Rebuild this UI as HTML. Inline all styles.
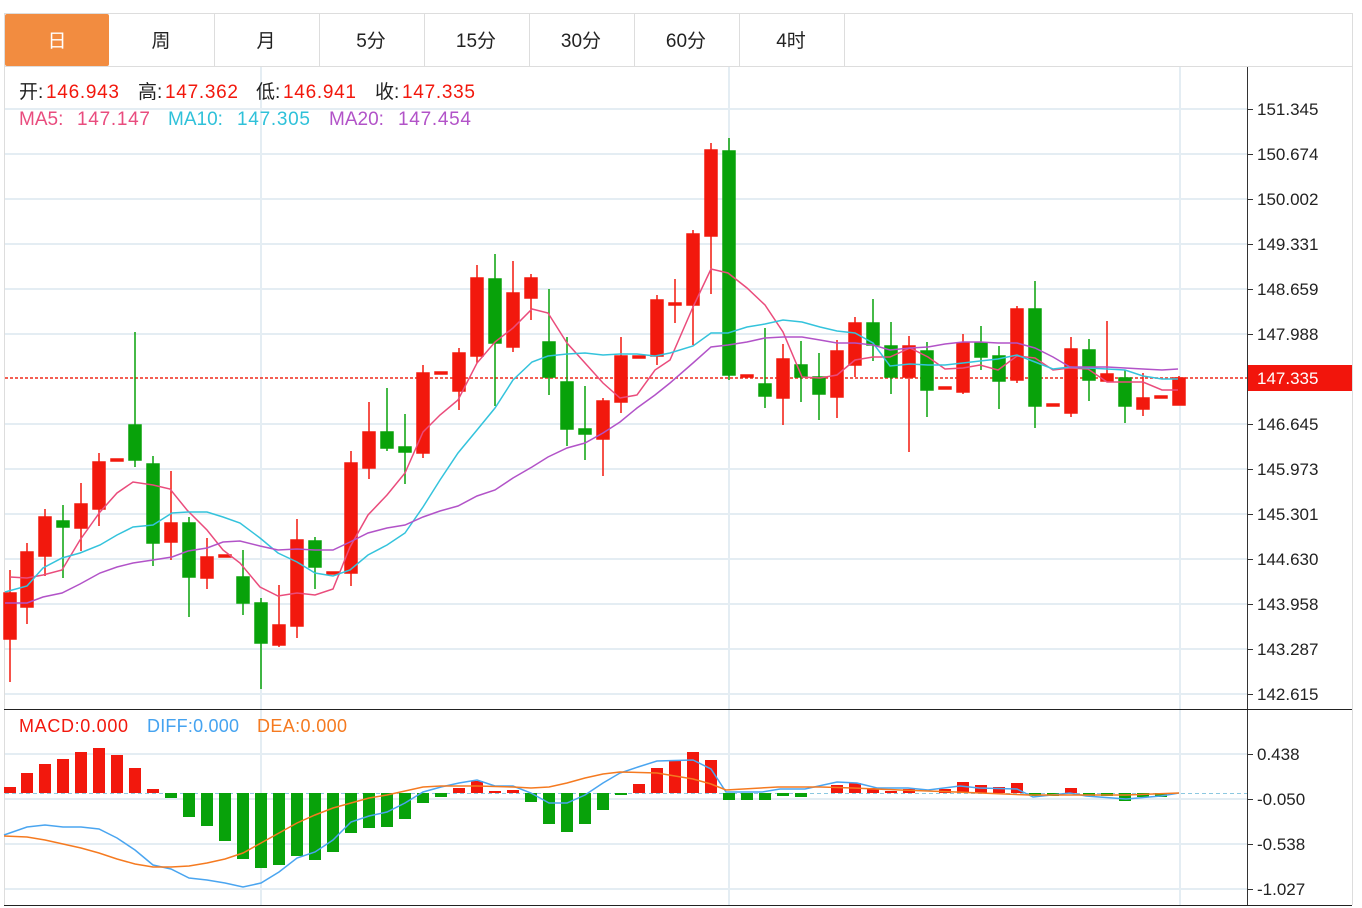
<!DOCTYPE html>
<html><head><meta charset="utf-8"><style>
body{margin:0;background:#fff;width:1362px;height:908px;overflow:hidden;font-family:"Liberation Sans","Noto Sans CJK SC",sans-serif}
</style></head><body>
<svg width="1362" height="908" xmlns="http://www.w3.org/2000/svg" style="position:absolute;left:0;top:0;font-family:'Liberation Sans','Noto Sans CJK SC',sans-serif">
<rect x="4.5" y="13.5" width="1348" height="53" fill="#fff" stroke="#ddd"/>
<rect x="5" y="14" width="104" height="52" rx="2" fill="#f28c40"/>
<g stroke="#ddd"><line x1="214.5" y1="13" x2="214.5" y2="66"/><line x1="319.5" y1="13" x2="319.5" y2="66"/><line x1="424.5" y1="13" x2="424.5" y2="66"/><line x1="529.5" y1="13" x2="529.5" y2="66"/><line x1="634.5" y1="13" x2="634.5" y2="66"/><line x1="739.5" y1="13" x2="739.5" y2="66"/><line x1="844.5" y1="13" x2="844.5" y2="66"/></g>
<g font-size="19" text-anchor="middle" fill="#222"><text x="57" y="47" fill="#fff">日</text><text x="161" y="47">周</text><text x="266" y="47">月</text><text x="371" y="47">5分</text><text x="476" y="47">15分</text><text x="581" y="47">30分</text><text x="686" y="47">60分</text><text x="791" y="47">4时</text></g>
<line x1="4.5" y1="66" x2="4.5" y2="905" stroke="#ddd"/>
<line x1="1352.5" y1="66" x2="1352.5" y2="905" stroke="#ddd"/>
<g stroke="#e4edf3" stroke-width="2">
<line x1="5" y1="109" x2="1247" y2="109"/><line x1="5" y1="154" x2="1247" y2="154"/><line x1="5" y1="199" x2="1247" y2="199"/><line x1="5" y1="244" x2="1247" y2="244"/><line x1="5" y1="289" x2="1247" y2="289"/><line x1="5" y1="334" x2="1247" y2="334"/><line x1="5" y1="424" x2="1247" y2="424"/><line x1="5" y1="469" x2="1247" y2="469"/><line x1="5" y1="514" x2="1247" y2="514"/><line x1="5" y1="559" x2="1247" y2="559"/><line x1="5" y1="604" x2="1247" y2="604"/><line x1="5" y1="649" x2="1247" y2="649"/><line x1="5" y1="694" x2="1247" y2="694"/>
<line x1="5" y1="754" x2="1247" y2="754"/><line x1="5" y1="799" x2="1247" y2="799"/><line x1="5" y1="844" x2="1247" y2="844"/><line x1="5" y1="889" x2="1247" y2="889"/>
<line x1="261" y1="67" x2="261" y2="905"/><line x1="729" y1="67" x2="729" y2="905"/><line x1="1180" y1="67" x2="1180" y2="905"/>
</g>
<line x1="1247.5" y1="67" x2="1247.5" y2="905" stroke="#333"/>
<line x1="4" y1="709.5" x2="1352" y2="709.5" stroke="#222"/>
<line x1="4" y1="905.5" x2="1352" y2="905.5" stroke="#222"/>
<g stroke="#333"><line x1="1247" y1="109.5" x2="1253" y2="109.5"/><line x1="1247" y1="154.5" x2="1253" y2="154.5"/><line x1="1247" y1="199.5" x2="1253" y2="199.5"/><line x1="1247" y1="244.5" x2="1253" y2="244.5"/><line x1="1247" y1="289.5" x2="1253" y2="289.5"/><line x1="1247" y1="334.5" x2="1253" y2="334.5"/><line x1="1247" y1="424.5" x2="1253" y2="424.5"/><line x1="1247" y1="469.5" x2="1253" y2="469.5"/><line x1="1247" y1="514.5" x2="1253" y2="514.5"/><line x1="1247" y1="559.5" x2="1253" y2="559.5"/><line x1="1247" y1="604.5" x2="1253" y2="604.5"/><line x1="1247" y1="649.5" x2="1253" y2="649.5"/><line x1="1247" y1="694.5" x2="1253" y2="694.5"/><line x1="1247" y1="754.5" x2="1253" y2="754.5"/><line x1="1247" y1="799.5" x2="1253" y2="799.5"/><line x1="1247" y1="844.5" x2="1253" y2="844.5"/><line x1="1247" y1="889.5" x2="1253" y2="889.5"/></g>
<g font-size="17" fill="#222"><text x="1257" y="115">151.345</text><text x="1257" y="160">150.674</text><text x="1257" y="205">150.002</text><text x="1257" y="250">149.331</text><text x="1257" y="295">148.659</text><text x="1257" y="340">147.988</text><text x="1257" y="430">146.645</text><text x="1257" y="475">145.973</text><text x="1257" y="520">145.301</text><text x="1257" y="565">144.630</text><text x="1257" y="610">143.958</text><text x="1257" y="655">143.287</text><text x="1257" y="700">142.615</text>
<text x="1257" y="760">0.438</text><text x="1257" y="805">-0.050</text><text x="1257" y="850">-0.538</text><text x="1257" y="895">-1.027</text></g>
<line x1="5" y1="378" x2="1247" y2="378" stroke="#f02a1a" stroke-dasharray="3,2" stroke-width="1.5"/>
<rect x="1248" y="365" width="104" height="26" fill="#f2150c"/>
<text x="1257" y="384" font-size="17" fill="#fff">147.335</text>
<g stroke-width="1.5">
<g stroke="#f2180d" fill="#f2180d">
<line x1="10" y1="570" x2="10" y2="682"/><rect x="4" y="593" width="12" height="46"/>
<line x1="27" y1="543" x2="27" y2="624"/><rect x="21" y="552" width="12" height="55"/>
<line x1="45" y1="509" x2="45" y2="576"/><rect x="39" y="517" width="12" height="39"/>
<line x1="81" y1="483" x2="81" y2="551"/><rect x="75" y="504" width="12" height="24"/>
<line x1="99" y1="453" x2="99" y2="526"/><rect x="93" y="462" width="12" height="47"/>
<rect x="111" y="459" width="12" height="2"/>
<line x1="171" y1="471" x2="171" y2="560"/><rect x="165" y="523" width="12" height="19"/>
<line x1="207" y1="538" x2="207" y2="589"/><rect x="201" y="557" width="12" height="21"/>
<rect x="219" y="555" width="12" height="2"/>
<line x1="279" y1="585" x2="279" y2="647"/><rect x="273" y="625" width="12" height="20"/>
<line x1="297" y1="519" x2="297" y2="638"/><rect x="291" y="540" width="12" height="86"/>
<rect x="327" y="572" width="12" height="2"/>
<line x1="351" y1="451" x2="351" y2="586"/><rect x="345" y="463" width="12" height="110"/>
<line x1="369" y1="402" x2="369" y2="479"/><rect x="363" y="432" width="12" height="36"/>
<line x1="423" y1="365" x2="423" y2="458"/><rect x="417" y="373" width="12" height="80"/>
<rect x="435" y="372" width="12" height="2"/>
<line x1="459" y1="348" x2="459" y2="410"/><rect x="453" y="353" width="12" height="38"/>
<line x1="477" y1="265" x2="477" y2="363"/><rect x="471" y="278" width="12" height="78"/>
<line x1="513" y1="261" x2="513" y2="352"/><rect x="507" y="293" width="12" height="54"/>
<line x1="531" y1="274" x2="531" y2="320"/><rect x="525" y="278" width="12" height="20"/>
<line x1="603" y1="398" x2="603" y2="476"/><rect x="597" y="401" width="12" height="38"/>
<line x1="621" y1="337" x2="621" y2="413"/><rect x="615" y="356" width="12" height="46"/>
<rect x="633" y="356" width="12" height="2"/>
<line x1="657" y1="295" x2="657" y2="365"/><rect x="651" y="300" width="12" height="56"/>
<line x1="675" y1="279" x2="675" y2="323"/><rect x="669" y="303" width="12" height="2"/>
<line x1="693" y1="230" x2="693" y2="345"/><rect x="687" y="234" width="12" height="71"/>
<line x1="711" y1="143" x2="711" y2="294"/><rect x="705" y="150" width="12" height="86"/>
<rect x="741" y="375" width="12" height="2"/>
<line x1="783" y1="344" x2="783" y2="425"/><rect x="777" y="359" width="12" height="39"/>
<line x1="837" y1="340" x2="837" y2="418"/><rect x="831" y="351" width="12" height="46"/>
<line x1="855" y1="317" x2="855" y2="377"/><rect x="849" y="323" width="12" height="42"/>
<line x1="909" y1="336" x2="909" y2="452"/><rect x="903" y="346" width="12" height="31"/>
<rect x="939" y="387" width="12" height="2"/>
<line x1="963" y1="334" x2="963" y2="394"/><rect x="957" y="343" width="12" height="49"/>
<line x1="1017" y1="306" x2="1017" y2="383"/><rect x="1011" y="309" width="12" height="71"/>
<rect x="1047" y="404" width="12" height="2"/>
<line x1="1071" y1="337" x2="1071" y2="417"/><rect x="1065" y="349" width="12" height="64"/>
<line x1="1107" y1="321" x2="1107" y2="381"/><rect x="1101" y="374" width="12" height="7"/>
<line x1="1143" y1="373" x2="1143" y2="416"/><rect x="1137" y="398" width="12" height="11"/>
<rect x="1155" y="396" width="12" height="2"/>
<line x1="1179" y1="376" x2="1179" y2="405"/><rect x="1173" y="378" width="12" height="27"/>
</g>
<g stroke="#08a20a" fill="#08a20a">
<line x1="63" y1="505" x2="63" y2="578"/><rect x="57" y="521" width="12" height="6"/>
<line x1="135" y1="332" x2="135" y2="467"/><rect x="129" y="425" width="12" height="35"/>
<line x1="153" y1="456" x2="153" y2="566"/><rect x="147" y="464" width="12" height="79"/>
<line x1="189" y1="517" x2="189" y2="617"/><rect x="183" y="523" width="12" height="54"/>
<line x1="243" y1="550" x2="243" y2="615"/><rect x="237" y="577" width="12" height="26"/>
<line x1="261" y1="598" x2="261" y2="689"/><rect x="255" y="603" width="12" height="40"/>
<line x1="315" y1="537" x2="315" y2="589"/><rect x="309" y="541" width="12" height="26"/>
<line x1="387" y1="388" x2="387" y2="451"/><rect x="381" y="432" width="12" height="16"/>
<line x1="405" y1="414" x2="405" y2="484"/><rect x="399" y="447" width="12" height="5"/>
<line x1="495" y1="254" x2="495" y2="406"/><rect x="489" y="279" width="12" height="64"/>
<line x1="549" y1="289" x2="549" y2="395"/><rect x="543" y="342" width="12" height="35"/>
<line x1="567" y1="337" x2="567" y2="446"/><rect x="561" y="382" width="12" height="47"/>
<line x1="585" y1="386" x2="585" y2="460"/><rect x="579" y="429" width="12" height="5"/>
<line x1="729" y1="138" x2="729" y2="380"/><rect x="723" y="151" width="12" height="224"/>
<line x1="765" y1="328" x2="765" y2="408"/><rect x="759" y="384" width="12" height="12"/>
<line x1="801" y1="341" x2="801" y2="402"/><rect x="795" y="365" width="12" height="12"/>
<line x1="819" y1="353" x2="819" y2="420"/><rect x="813" y="377" width="12" height="17"/>
<line x1="873" y1="299" x2="873" y2="361"/><rect x="867" y="323" width="12" height="22"/>
<line x1="891" y1="322" x2="891" y2="394"/><rect x="885" y="346" width="12" height="31"/>
<line x1="927" y1="342" x2="927" y2="417"/><rect x="921" y="351" width="12" height="39"/>
<line x1="981" y1="326" x2="981" y2="370"/><rect x="975" y="343" width="12" height="14"/>
<line x1="999" y1="346" x2="999" y2="409"/><rect x="993" y="356" width="12" height="25"/>
<line x1="1035" y1="281" x2="1035" y2="428"/><rect x="1029" y="309" width="12" height="97"/>
<line x1="1089" y1="339" x2="1089" y2="401"/><rect x="1083" y="350" width="12" height="30"/>
<line x1="1125" y1="370" x2="1125" y2="423"/><rect x="1119" y="378" width="12" height="28"/>
</g>
</g>
<g fill="none" stroke-width="1.5">
<polyline stroke="#ea4c7c" points="10,577 27,578 43,575 62,570 80,540 100,512 117,493 133,482 153,485 170,489 187,510 207,530 223,550 240,563 260,587 278,596 297,593 315,595 333,589 350,547 368,515 387,495 405,473 423,432 440,415 458,400 477,363 495,342 513,328 532,309 548,313 567,343 585,363 603,383 620,398 637,395 655,370 670,360 693,307 711,269 728,273 747,288 765,305 783,332 802,377 820,378 837,375 855,360 873,357 890,357 910,348 928,357 945,369 963,368 980,365 998,370 1017,356 1035,358 1053,370 1070,368 1088,369 1107,382 1125,382 1143,382 1162,390 1178,390"/>
<polyline stroke="#34c3dc" points="5,592 27,586 43,568 62,558 80,553 100,545 117,535 133,527 153,525 172,513 188,512 207,512 223,517 240,523 260,538 278,553 297,562 315,573 333,576 350,570 368,555 387,545 405,533 423,507 440,480 458,453 477,430 495,408 513,380 532,362 548,356 567,354 585,353 603,355 620,354 637,354 655,356 670,353 693,346 711,333 728,333 747,327 765,324 783,320 802,322 820,327 837,331 855,333 873,343 890,366 910,364 928,365 945,365 963,363 980,361 998,359 1017,355 1035,362 1053,369 1070,367 1088,368 1107,369 1125,370 1143,376 1162,379 1178,379"/>
<polyline stroke="#b253c8" points="5,603 27,603 43,597 62,593 80,584 100,573 117,567 133,563 153,560 172,557 188,551 207,548 223,542 240,541 260,546 278,550 297,549 315,550 333,550 350,542 368,533 387,528 405,525 423,517 440,511 458,506 477,496 495,490 513,478 532,467 548,457 567,448 585,443 603,433 620,422 637,408 655,395 670,383 693,363 711,347 728,345 747,342 765,338 783,337 802,337 820,340 837,343 855,343 873,345 890,350 910,348 928,347 945,344 963,342 980,342 998,343 1017,343 1035,348 1053,357 1070,367 1088,367 1107,367 1125,368 1143,369 1162,370 1178,369"/>
</g>
<g font-size="19">
<text x="19" y="98" fill="#222">开:</text><text x="46" y="98" fill="#f2180d" textLength="73">146.943</text>
<text x="138" y="98" fill="#222">高:</text><text x="165" y="98" fill="#f2180d" textLength="73">147.362</text>
<text x="256" y="98" fill="#222">低:</text><text x="283" y="98" fill="#f2180d" textLength="73">146.941</text>
<text x="375" y="98" fill="#222">收:</text><text x="402" y="98" fill="#f2180d" textLength="73">147.335</text>
<text x="19" y="125" fill="#e94c7e">MA5:</text><text x="77" y="125" fill="#e94c7e" textLength="73">147.147</text>
<text x="168" y="125" fill="#2fc1d9">MA10:</text><text x="237" y="125" fill="#2fc1d9" textLength="73">147.305</text>
<text x="329" y="125" fill="#b253c8">MA20:</text><text x="398" y="125" fill="#b253c8" textLength="73">147.454</text>
</g>
<g font-size="18">
<text x="19" y="732" fill="#f2180d" textLength="109">MACD:0.000</text>
<text x="147" y="732" fill="#45a3f0" textLength="92">DIFF:0.000</text>
<text x="257" y="732" fill="#f57a20" textLength="90">DEA:0.000</text>
</g>
<line x1="5" y1="793.5" x2="1247" y2="793.5" stroke="#8cc8e0" stroke-dasharray="4,3"/>
<g fill="#f2180d">
<rect x="4" y="787" width="12" height="6"/><rect x="21" y="773" width="12" height="20"/><rect x="39" y="764" width="12" height="29"/><rect x="57" y="759" width="12" height="34"/><rect x="75" y="752" width="12" height="41"/><rect x="93" y="748" width="12" height="45"/><rect x="111" y="755" width="12" height="38"/><rect x="129" y="768" width="12" height="25"/><rect x="147" y="789" width="12" height="4"/>
<rect x="453" y="788" width="12" height="5"/><rect x="471" y="781" width="12" height="12"/><rect x="489" y="791" width="12" height="2"/><rect x="507" y="790" width="12" height="3"/>
<rect x="633" y="784" width="12" height="9"/><rect x="651" y="768" width="12" height="25"/><rect x="669" y="761" width="12" height="32"/><rect x="687" y="752" width="12" height="41"/><rect x="705" y="760" width="12" height="33"/>
<rect x="831" y="785" width="12" height="8"/><rect x="849" y="783" width="12" height="10"/><rect x="867" y="788" width="12" height="5"/><rect x="885" y="791" width="12" height="2"/><rect x="903" y="789" width="12" height="4"/><rect x="939" y="789" width="12" height="4"/><rect x="957" y="782" width="12" height="11"/><rect x="975" y="785" width="12" height="8"/><rect x="993" y="787" width="12" height="6"/><rect x="1011" y="783" width="12" height="10"/><rect x="1065" y="788" width="12" height="5"/>
</g>
<g fill="#08a20a">
<rect x="165" y="793" width="12" height="5"/><rect x="183" y="793" width="12" height="24"/><rect x="201" y="793" width="12" height="33"/><rect x="219" y="793" width="12" height="48"/><rect x="237" y="793" width="12" height="66"/><rect x="255" y="793" width="12" height="75"/><rect x="273" y="793" width="12" height="72"/><rect x="291" y="793" width="12" height="63"/><rect x="309" y="793" width="12" height="67"/><rect x="327" y="793" width="12" height="59"/><rect x="345" y="793" width="12" height="40"/><rect x="363" y="793" width="12" height="35"/><rect x="381" y="793" width="12" height="34"/><rect x="399" y="793" width="12" height="26"/><rect x="417" y="793" width="12" height="10"/><rect x="435" y="793" width="12" height="4"/>
<rect x="525" y="793" width="12" height="9"/><rect x="543" y="793" width="12" height="31"/><rect x="561" y="793" width="12" height="39"/><rect x="579" y="793" width="12" height="31"/><rect x="597" y="793" width="12" height="17"/><rect x="615" y="793" width="12" height="2"/>
<rect x="723" y="793" width="12" height="7"/><rect x="741" y="793" width="12" height="7"/><rect x="759" y="793" width="12" height="7"/><rect x="777" y="793" width="12" height="3"/><rect x="795" y="793" width="12" height="4"/>
<rect x="1029" y="793" width="12" height="3"/><rect x="1047" y="793" width="12" height="3"/><rect x="1083" y="793" width="12" height="3"/><rect x="1101" y="793" width="12" height="3"/><rect x="1119" y="793" width="12" height="8"/><rect x="1137" y="793" width="12" height="4"/><rect x="1155" y="793" width="12" height="4"/>
</g>
<g fill="none" stroke-width="1.5">
<polyline stroke="#4aa5f0" points="4,835 27,827 45,825 63,827 81,827 99,829 117,838 135,850 153,865 171,869 189,878 207,880 225,883 243,887 261,883 279,872 297,858 315,852 333,840 351,822 369,816 387,812 405,803 423,792 441,787 459,783 477,780 495,786 513,786 531,793 549,803 567,803 585,795 603,783 620,773 638,767 657,761 693,760 711,769 726,792 762,792 780,789 805,789 837,782 857,783 877,788 908,788 928,790 960,786 979,788 1017,789 1033,797 1070,793 1086,796 1126,799 1161,796 1179,793"/>
<polyline stroke="#f57a20" points="4,836 27,837 45,840 63,844 81,848 99,853 117,859 135,864 153,867 171,867 189,866 207,863 225,859 243,853 261,843 279,833 297,823 315,815 333,808 351,803 369,798 387,795 405,791 423,787 441,786 477,786 513,787 531,788 549,787 567,783 585,778 603,774 620,772 657,773 675,776 693,779 711,784 726,790 778,787 821,787 853,788 900,790 956,792 1029,795 1126,795 1179,793"/>
</g>
</svg>
</body></html>
